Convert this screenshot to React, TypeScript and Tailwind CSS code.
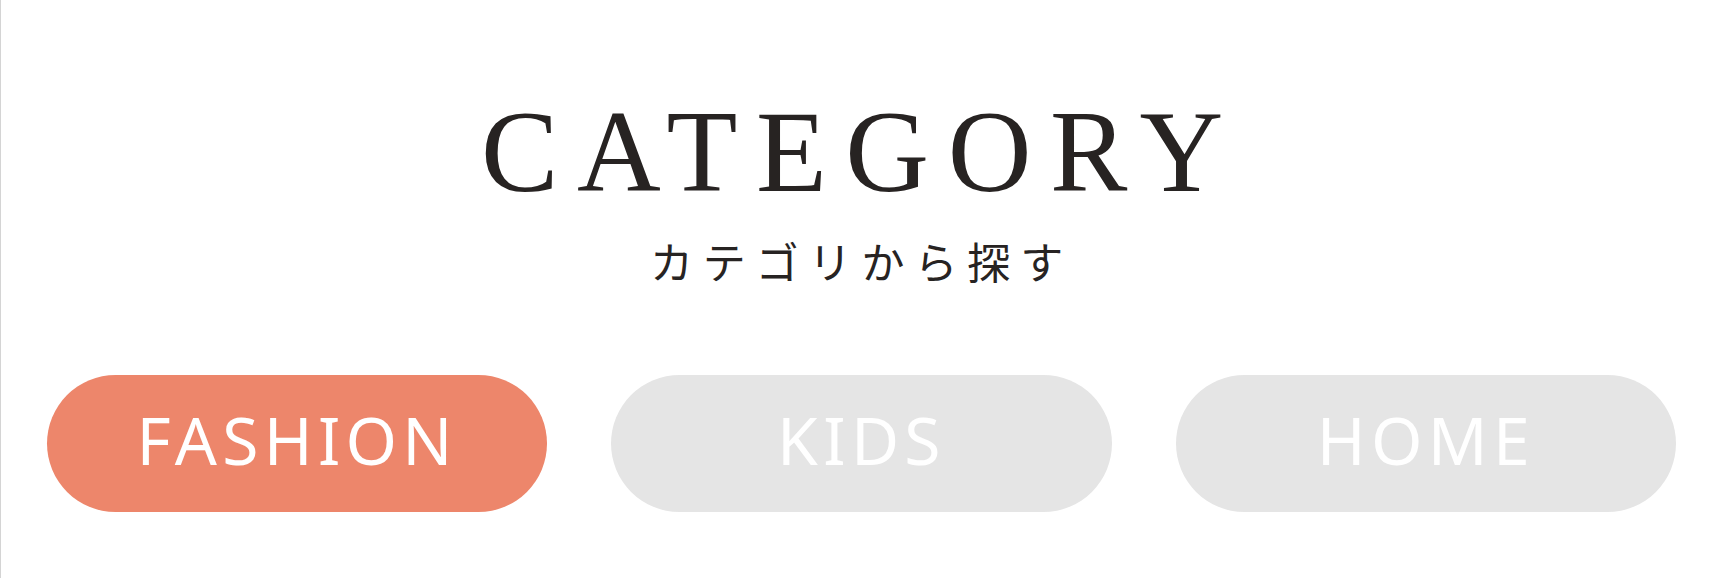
const CATEGORIES = [
  { label: "FASHION", active: true },
  { label: "KIDS", active: false },
  { label: "HOME", active: false },
];

export default function App() {
  return (
    <div className="w-full h-[578px] bg-white border-l border-[#d4d4d4] flex flex-col items-center pt-[94px]">
      {/* Heading */}
      <h1 className="font-['Liberation_Serif','Times_New_Roman',serif] text-[116px] leading-none tracking-[0.16em] text-[#272322] font-normal">
        CATEGORY
      </h1>
      <p className="mt-[29px] font-['Noto_Sans_CJK_JP','Noto_Sans',sans-serif] text-[43px] leading-none tracking-[0.23em] text-[#272322]">
        カテゴリから探す
      </p>

      {/* Category pills */}
      <div className="mt-[93px] w-full px-[46px] grid grid-cols-3 gap-[64px]">
        {CATEGORIES.map((c) => (
          <button
            key={c.label}
            className={`h-[137px] pb-[10px] rounded-full flex items-center justify-center text-white font-['Noto_Sans','Noto_Sans_CJK_JP',sans-serif] text-[66px] leading-none tracking-[0.08em] ${
              c.active ? "bg-[#ed866b]" : "bg-[#e5e5e5]"
            }`}
          >
            {c.label}
          </button>
        ))}
      </div>
    </div>
  );
}
